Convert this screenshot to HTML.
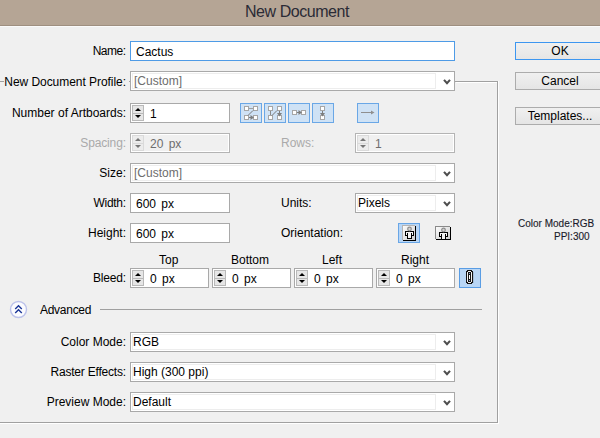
<!DOCTYPE html>
<html><head><meta charset="utf-8">
<style>
*{margin:0;padding:0;box-sizing:border-box}
html,body{width:600px;height:438px;overflow:hidden;background:#f0f0f0;font-family:"Liberation Sans",sans-serif;font-size:12px;color:#000}
.a{position:absolute}
.t{position:absolute;white-space:nowrap;line-height:14px;margin-top:1px}
.r{text-align:right}
#title{left:0;top:0;width:600px;height:26px;background:#b5a595;border-bottom:1px solid #9e8f80}
#tl{left:0;top:26px;width:600px;height:1px;background:#fafafa}
#title span{position:absolute;left:245px;top:2px;font-size:16px;letter-spacing:-0.45px;color:#2b2b36;line-height:20px}
.box{position:absolute;border:1px solid #a9a9a9;background:#fff}
.focus{border-color:#4e9be6}
.ring{position:absolute;left:1px;top:1px;right:18px;bottom:1px;border:1px solid #ededed}
.chev{position:absolute;right:3px;top:7px;width:8px;height:6px;overflow:visible}
.spin{position:absolute;left:1px;top:1px;width:12px;height:16px}
.ib{position:absolute;width:22px;height:20px;border:1px solid #6aa7e6;background:#cfe2f5}
.ib svg{position:absolute;left:-1px;top:-1px}
.dis{background:#f0f0f0;border-color:#b4b4b4}
.dis .inner{position:absolute;left:0;top:0;right:0;bottom:0;border:1px solid #fff}
.gray{color:#aaaaaa}
.btn{position:absolute;left:515px;width:90px;height:18px;border:1px solid #acacac;background:linear-gradient(#f0f0f0,#e5e5e5);text-align:center;line-height:15px;padding-top:1px}
</style></head><body>
<div id="title" class="a"><span>New Document</span></div><div id="tl" class="a"></div>
<div class="a" style="left:0;top:81px;width:4px;height:1px;background:#a0a0a0"></div>
<div class="a" style="left:129px;top:81px;width:1px;height:1px;background:#a0a0a0"></div>
<div class="a" style="left:455px;top:81px;width:43px;height:1px;background:#a0a0a0"></div>
<div class="a" style="left:497px;top:81px;width:1px;height:342px;background:#a0a0a0"></div>
<div class="a" style="left:0;top:422px;width:498px;height:1px;background:#a0a0a0"></div>
<div class="a" style="left:456px;top:82px;width:41px;height:1px;background:#fff"></div>
<div class="a" style="left:498px;top:81px;width:1px;height:343px;background:#fff"></div>
<div class="a" style="left:0;top:423px;width:499px;height:1px;background:#fff"></div>
<div class="t r " style="right:474.500px;top:43px;letter-spacing:-0.500px">Name:</div>
<div class="t r " style="right:474.050px;top:74px;letter-spacing:-0.050px">New Document Profile:</div>
<div class="t r " style="right:474px;top:105px">Number of Artboards:</div>
<div class="t r gray" style="right:474.143px;top:135px;letter-spacing:-0.143px">Spacing:</div>
<div class="t r " style="right:474px;top:165px">Size:</div>
<div class="t r " style="right:474.300px;top:195px;letter-spacing:-0.300px">Width:</div>
<div class="t r " style="right:474px;top:225px">Height:</div>
<div class="t r " style="right:474.200px;top:270px;letter-spacing:-0.200px">Bleed:</div>
<div class="t r " style="right:474px;top:334px">Color Mode:</div>
<div class="t r " style="right:474.214px;top:364px;letter-spacing:-0.214px">Raster Effects:</div>
<div class="t r " style="right:474px;top:394px">Preview Mode:</div>
<div class="t gray" style="left:281px;top:135px">Rows:</div>
<div class="t" style="left:281px;top:195px;">Units:</div>
<div class="t" style="left:281px;top:225px;">Orientation:</div>
<div class="box focus" style="left:130px;top:41px;width:325px;height:20px"></div>
<div class="t" style="left:136px;top:44px;word-spacing:2px">Cactus</div>
<div class="box" style="left:130px;top:71px;width:325px;height:20px"><div class="ring"></div><svg class="chev" viewBox="0 0 8 6"><path d="M1 0.9 L4 4.2 L7 0.9" fill="none" stroke="#4d4d4d" stroke-width="2.1"/></svg></div>
<div class="t" style="left:134px;top:73px;color:#6d6d6d">[Custom]</div>
<div class="box" style="left:130px;top:103px;width:100px;height:20px"><svg class="spin" width="12" height="16" viewBox="0 0 12 16"><rect x="0.5" y="0.5" width="11" height="15" fill="#e6e6e6" stroke="#b9b9b9"/><line x1="0" y1="8.5" x2="12" y2="8.5" stroke="#b9b9b9"/><path d="M3 6H9L6 3Z" fill="#000"/><path d="M3 10H9L6 13Z" fill="#000"/></svg></div>
<div class="t" style="left:150px;top:106px;word-spacing:2px;">1</div>
<div class="ib" style="left:240px;top:103px;"><svg width="22" height="20" viewBox="0 0 22 20"><rect x="4.5" y="3.5" width="4" height="4" fill="#fff" stroke="#a6a6a6"/><rect x="13.5" y="3.5" width="4" height="4" fill="#fff" stroke="#a6a6a6"/><rect x="4.5" y="12.5" width="4" height="4" fill="#fff" stroke="#a6a6a6"/><rect x="13.5" y="12.5" width="4" height="4" fill="#fff" stroke="#a6a6a6"/><line x1="9" y1="5.5" x2="13" y2="5.5" stroke="#a0a0a0"/><line x1="13" y1="7.5" x2="8" y2="12.5" stroke="#777"/><line x1="9" y1="14.5" x2="11" y2="14.5" stroke="#7d7d7d"/><path d="M10.5 12L14 14.5L10.5 17Z" fill="#7d7d7d"/></svg></div>
<div class="ib" style="left:264px;top:103px;"><svg width="22" height="20" viewBox="0 0 22 20"><rect x="4.5" y="3.5" width="4" height="4" fill="#fff" stroke="#a6a6a6"/><rect x="13.5" y="3.5" width="4" height="4" fill="#fff" stroke="#a6a6a6"/><rect x="4.5" y="12.5" width="4" height="4" fill="#fff" stroke="#a6a6a6"/><rect x="13.5" y="12.5" width="4" height="4" fill="#fff" stroke="#a6a6a6"/><line x1="6.5" y1="8" x2="6.5" y2="12" stroke="#8a8a8a"/><line x1="8" y1="12.5" x2="13" y2="7.5" stroke="#777"/><line x1="15.5" y1="8" x2="15.5" y2="10" stroke="#7d7d7d"/><path d="M13 10L15.5 13.5L18 10Z" fill="#7d7d7d"/></svg></div>
<div class="ib" style="left:288px;top:103px;"><svg width="22" height="20" viewBox="0 0 22 20"><rect x="4.5" y="7.5" width="4" height="4" fill="#fff" stroke="#a6a6a6"/><rect x="13.5" y="7.5" width="4" height="4" fill="#fff" stroke="#a6a6a6"/><line x1="9" y1="9.5" x2="11" y2="9.5" stroke="#7d7d7d"/><path d="M10.5 7L14 9.5L10.5 12Z" fill="#7d7d7d"/></svg></div>
<div class="ib" style="left:312px;top:103px;"><svg width="22" height="20" viewBox="0 0 22 20"><rect x="8.5" y="3.5" width="4" height="4" fill="#fff" stroke="#a6a6a6"/><rect x="8.5" y="12.5" width="4" height="4" fill="#fff" stroke="#a6a6a6"/><line x1="10.5" y1="8" x2="10.5" y2="10" stroke="#7d7d7d"/><path d="M8 10L10.5 13.5L13 10Z" fill="#7d7d7d"/></svg></div>
<div class="ib" style="left:357px;top:103px;"><svg width="22" height="20" viewBox="0 0 22 20"><line x1="4" y1="9.5" x2="16" y2="9.5" stroke="#8f8f8f"/><path d="M14 7.5L17.5 9.5L14 11.5Z" fill="#8f8f8f"/></svg></div>
<div class="box dis" style="left:130px;top:133px;width:100px;height:20px"><div class="inner"></div><svg class="spin" width="12" height="16" viewBox="0 0 12 16"><rect x="0.5" y="0.5" width="11" height="15" fill="#ececec" stroke="#dadada"/><line x1="0" y1="8.5" x2="12" y2="8.5" stroke="#dadada"/><path d="M3 6H9L6 3Z" fill="#767676"/><path d="M3 10H9L6 13Z" fill="#767676"/></svg></div>
<div class="t" style="left:150px;top:136px;word-spacing:2px;color:#6d6d6d">20 px</div>
<div class="box dis" style="left:355px;top:133px;width:100px;height:20px"><div class="inner"></div><svg class="spin" width="12" height="16" viewBox="0 0 12 16"><rect x="0.5" y="0.5" width="11" height="15" fill="#ececec" stroke="#dadada"/><line x1="0" y1="8.5" x2="12" y2="8.5" stroke="#dadada"/><path d="M3 6H9L6 3Z" fill="#767676"/><path d="M3 10H9L6 13Z" fill="#767676"/></svg></div>
<div class="t" style="left:375px;top:136px;word-spacing:2px;color:#6d6d6d">1</div>
<div class="box" style="left:130px;top:163px;width:325px;height:20px"><div class="ring"></div><svg class="chev" viewBox="0 0 8 6"><path d="M1 0.9 L4 4.2 L7 0.9" fill="none" stroke="#4d4d4d" stroke-width="2.1"/></svg></div>
<div class="t" style="left:134px;top:165px;color:#6d6d6d">[Custom]</div>
<div class="box" style="left:130px;top:193px;width:100px;height:20px"></div>
<div class="t" style="left:136px;top:196px;word-spacing:2px">600 px</div>
<div class="box" style="left:130px;top:223px;width:100px;height:20px"></div>
<div class="t" style="left:136px;top:226px;word-spacing:2px">600 px</div>
<div class="box" style="left:355px;top:193px;width:100px;height:20px"><div class="ring"></div><svg class="chev" viewBox="0 0 8 6"><path d="M1 0.9 L4 4.2 L7 0.9" fill="none" stroke="#4d4d4d" stroke-width="2.1"/></svg></div>
<div class="t" style="left:358px;top:195px;color:#000">Pixels</div>
<div class="ib" style="left:398px;top:223px;background:#b9d6f5;border-color:#69a6e6"><svg width="22" height="20" viewBox="0 0 22 20"><defs><linearGradient id="pg" x1="0" y1="0" x2="1" y2="1"><stop offset="0" stop-color="#ffffff"/><stop offset="1" stop-color="#cfcfcf"/></linearGradient></defs><g shape-rendering="crispEdges"><rect x="4" y="2" width="13" height="15" fill="url(#pg)"/><rect x="4" y="2" width="13" height="1" fill="#b4b4b4"/><rect x="4" y="2" width="1" height="15" fill="#b4b4b4"/><rect x="17" y="3" width="1" height="15" fill="#000"/><rect x="5" y="17" width="13" height="1" fill="#000"/><path d="M7 8H16V13H14V16H9V13H7Z" fill="#000"/><path d="M8 9H15V12H13V15H10V12H8Z" fill="#f4f4f4"/><rect x="9" y="10" width="1" height="3" fill="#000"/><rect x="13" y="10" width="1" height="3" fill="#000"/></g><circle cx="11.5" cy="6" r="1.8" fill="#d4d4d4" stroke="#8c8c8c" stroke-width="1.2"/></svg></div>
<svg class="a" style="left:435px;top:226px" width="16" height="14" viewBox="0 0 16 14"><defs><linearGradient id="lg" x1="0" y1="0" x2="1" y2="1"><stop offset="0" stop-color="#ffffff"/><stop offset="1" stop-color="#cdcdcd"/></linearGradient></defs><g shape-rendering="crispEdges"><rect x="0" y="0" width="15" height="13" fill="url(#lg)"/><rect x="0" y="0" width="15" height="1" fill="#8a8a8a"/><rect x="0" y="0" width="1" height="13" fill="#8a8a8a"/><rect x="15" y="1" width="1" height="13" fill="#000"/><rect x="1" y="13" width="15" height="1" fill="#000"/><path d="M4 6H13V11H11V13H6V11H4Z" fill="#000"/><path d="M5 7H12V10H10V13H7V10H5Z" fill="#f4f4f4"/><rect x="6" y="8" width="1" height="3" fill="#000"/><rect x="10" y="8" width="1" height="3" fill="#000"/></g><circle cx="8.5" cy="4" r="1.8" fill="#d4d4d4" stroke="#8c8c8c" stroke-width="1.2"/></svg>
<div class="t" style="left:159px;top:252px;">Top</div>
<div class="t" style="left:231px;top:252px;">Bottom</div>
<div class="t" style="left:322px;top:252px;">Left</div>
<div class="t" style="left:401px;top:252px;">Right</div>
<div class="box" style="left:130px;top:268px;width:79px;height:20px"><svg class="spin" width="12" height="16" viewBox="0 0 12 16"><rect x="0.5" y="0.5" width="11" height="15" fill="#e6e6e6" stroke="#b9b9b9"/><line x1="0" y1="8.5" x2="12" y2="8.5" stroke="#b9b9b9"/><path d="M3 6H9L6 3Z" fill="#000"/><path d="M3 10H9L6 13Z" fill="#000"/></svg></div>
<div class="t" style="left:150px;top:271px;word-spacing:2px;">0 px</div>
<div class="box" style="left:212px;top:268px;width:79px;height:20px"><svg class="spin" width="12" height="16" viewBox="0 0 12 16"><rect x="0.5" y="0.5" width="11" height="15" fill="#e6e6e6" stroke="#b9b9b9"/><line x1="0" y1="8.5" x2="12" y2="8.5" stroke="#b9b9b9"/><path d="M3 6H9L6 3Z" fill="#000"/><path d="M3 10H9L6 13Z" fill="#000"/></svg></div>
<div class="t" style="left:232px;top:271px;word-spacing:2px;">0 px</div>
<div class="box" style="left:294px;top:268px;width:79px;height:20px"><svg class="spin" width="12" height="16" viewBox="0 0 12 16"><rect x="0.5" y="0.5" width="11" height="15" fill="#e6e6e6" stroke="#b9b9b9"/><line x1="0" y1="8.5" x2="12" y2="8.5" stroke="#b9b9b9"/><path d="M3 6H9L6 3Z" fill="#000"/><path d="M3 10H9L6 13Z" fill="#000"/></svg></div>
<div class="t" style="left:314px;top:271px;word-spacing:2px;">0 px</div>
<div class="box" style="left:376px;top:268px;width:79px;height:20px"><svg class="spin" width="12" height="16" viewBox="0 0 12 16"><rect x="0.5" y="0.5" width="11" height="15" fill="#e6e6e6" stroke="#b9b9b9"/><line x1="0" y1="8.5" x2="12" y2="8.5" stroke="#b9b9b9"/><path d="M3 6H9L6 3Z" fill="#000"/><path d="M3 10H9L6 13Z" fill="#000"/></svg></div>
<div class="t" style="left:396px;top:271px;word-spacing:2px;">0 px</div>
<div class="ib" style="left:459px;top:268px;background:#b9d6f5;border-color:#5a9de4"><svg width="22" height="20" viewBox="0 0 22 20"><g shape-rendering="crispEdges"><path d="M8 2H13V3H14V15H13V16H8V15H7V3H8Z" fill="#141414"/><path d="M9 3H12V4H9ZM8 4H9V14H8ZM12 4H13V14H12ZM9 14H12V15H9Z" fill="#f2f2f2"/><rect x="10" y="7" width="1" height="4" fill="#fff"/><rect x="10" y="5" width="1" height="1" fill="#8aa6cc"/><rect x="10" y="12" width="1" height="1" fill="#8aa6cc"/></g><rect x="14" y="4" width="1" height="11" fill="#000" opacity="0.12"/></svg></div>
<svg class="a" style="left:8px;top:299px" width="22" height="22" viewBox="0 0 22 22"><circle cx="10.5" cy="10.5" r="8" fill="#fbfbfe" stroke="#bcc2ea" stroke-width="1.4"/><path d="M7.2 10L10.5 6.8L13.8 10M7.2 14L10.5 10.8L13.8 14" fill="none" stroke="#1a3597" stroke-width="1.4"/></svg>
<div class="t" style="left:40px;top:302px;letter-spacing:-0.28px">Advanced</div>
<div class="a" style="left:100px;top:309px;width:382px;height:1px;background:#a0a0a0"></div>
<div class="box" style="left:130px;top:332px;width:325px;height:20px"><div class="ring"></div><svg class="chev" viewBox="0 0 8 6"><path d="M1 0.9 L4 4.2 L7 0.9" fill="none" stroke="#4d4d4d" stroke-width="2.1"/></svg></div>
<div class="t" style="left:133px;top:334px;color:#000">RGB</div>
<div class="box" style="left:130px;top:362px;width:325px;height:20px"><div class="ring"></div><svg class="chev" viewBox="0 0 8 6"><path d="M1 0.9 L4 4.2 L7 0.9" fill="none" stroke="#4d4d4d" stroke-width="2.1"/></svg></div>
<div class="t" style="left:133px;top:364px;color:#000">High (300 ppi)</div>
<div class="box" style="left:130px;top:392px;width:325px;height:20px"><div class="ring"></div><svg class="chev" viewBox="0 0 8 6"><path d="M1 0.9 L4 4.2 L7 0.9" fill="none" stroke="#4d4d4d" stroke-width="2.1"/></svg></div>
<div class="t" style="left:133px;top:394px;color:#000">Default</div>
<div class="btn" style="top:42px;border-color:#3c96f0">OK</div>
<div class="btn" style="top:72px">Cancel</div>
<div class="btn" style="top:107px">Templates...</div>
<div class="t" style="left:518px;top:216px;font-size:10px;color:#1a1a2a;-webkit-text-stroke:0.12px #1a1a2a">Color Mode:RGB</div>
<div class="t" style="left:554px;top:229px;font-size:10px;color:#1a1a2a;-webkit-text-stroke:0.12px #1a1a2a">PPI:300</div>
</body></html>
